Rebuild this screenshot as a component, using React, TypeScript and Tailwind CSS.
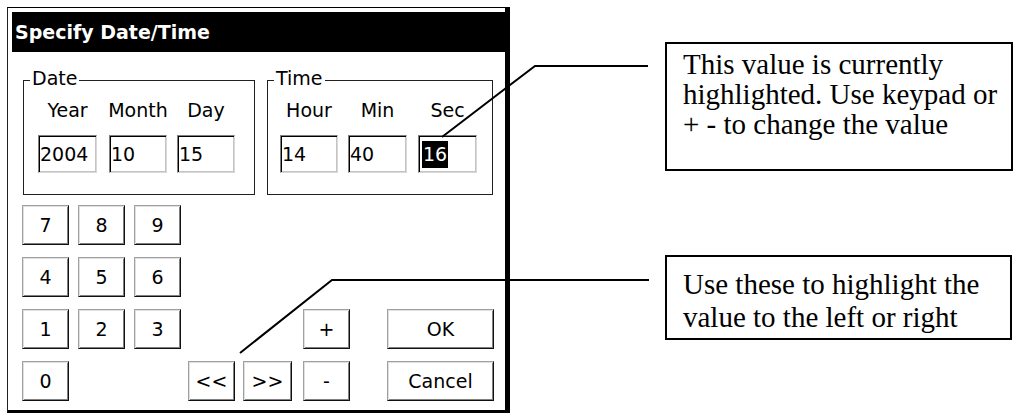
import React from "react";

const ui = "font-['DejaVu_Sans',sans-serif]";
const serif = "font-['Liberation_Serif','Times_New_Roman',serif]";

function Btn({ children, className = "" }: { children: React.ReactNode; className?: string }) {
  return (
    <div
      className={
        "flex h-[40px] items-center justify-center border border-t-[#a0a0a0] border-l-[#a0a0a0] border-r-[#101010] border-b-[#101010] bg-white text-[19px] leading-none text-black shadow-[inset_1px_1px_0_#e0e0e0,inset_-1px_-1px_0_#808080] " +
        className
      }
    >
      {children}
    </div>
  );
}

function Field({
  label,
  value,
  className = "",
  selected = false,
}: {
  label: string;
  value: string;
  className?: string;
  selected?: boolean;
}) {
  return (
    <div className={"flex flex-col items-center " + className}>
      <div className="text-[19px] leading-[22px]">{label}</div>
      <div className="mt-[14px] flex h-[38px] w-full items-center border border-t-[#808080] border-l-[#808080] border-r-[#d8d8d8] border-b-[#d8d8d8] pl-[1px] text-[19px] shadow-[inset_1px_1px_0_#000,inset_-1px_-1px_0_#c4c4c4]">
        {selected ? (
          <span className="ml-[2px] bg-black px-[1px] leading-[27px] text-white">{value}</span>
        ) : (
          <span className="leading-[22px]">{value}</span>
        )}
      </div>
    </div>
  );
}

function Group({ title, children, className = "" }: { title: string; children: React.ReactNode; className?: string }) {
  return (
    <div className={"relative h-[115px] border border-[#202020] " + className}>
      <div className="absolute -top-[14px] left-[6px] bg-white px-[2px] text-[19px] leading-[22px]">{title}</div>
      <div className="flex pt-[18px]">{children}</div>
    </div>
  );
}

export default function App() {
  return (
    <div className={"relative flex h-[413px] w-[1017px] overflow-hidden bg-white text-black " + ui}>
      {/* Dialog */}
      <div className="ml-[7px] mt-[7px] flex h-[406px] w-[503px] flex-col border-t border-l border-t-black border-l-[#202020] border-r-[5px] border-b-[3px] border-r-black border-b-black">
        <div className="ml-[4px] mt-[4px] flex h-[40px] items-center bg-black pl-[3px] text-[19px] font-bold text-white">
          Specify Date/Time
        </div>

        <div className="mt-[28px] flex">
          <Group title="Date" className="ml-[15px] w-[232px] pl-[14px]">
            <Field label="Year" value="2004" className="w-[59px]" />
            <Field label="Month" value="10" className="ml-[12px] w-[58px]" />
            <Field label="Day" value="15" className="ml-[10px] w-[58px]" />
          </Group>
          <Group title="Time" className="ml-[12px] w-[226px] pl-[12px]">
            <Field label="Hour" value="14" className="w-[58px]" />
            <Field label="Min" value="40" className="ml-[10px] w-[59px]" />
            <Field label="Sec" value="16" className="ml-[11px] w-[59px]" selected />
          </Group>
        </div>

        <div className="ml-[14px] mt-[10px] flex flex-col gap-[12px]">
          <div className="flex">
            <Btn className="w-[47px]">7</Btn>
            <Btn className="ml-[9px] w-[47px]">8</Btn>
            <Btn className="ml-[9px] w-[47px]">9</Btn>
          </div>
          <div className="flex">
            <Btn className="w-[47px]">4</Btn>
            <Btn className="ml-[9px] w-[47px]">5</Btn>
            <Btn className="ml-[9px] w-[47px]">6</Btn>
          </div>
          <div className="flex">
            <Btn className="w-[47px]">1</Btn>
            <Btn className="ml-[9px] w-[47px]">2</Btn>
            <Btn className="ml-[9px] w-[47px]">3</Btn>
            <Btn className="ml-[122px] w-[47px]">+</Btn>
            <Btn className="ml-[37px] w-[107px]">OK</Btn>
          </div>
          <div className="flex">
            <Btn className="w-[47px]">0</Btn>
            <Btn className="ml-[119px] w-[47px]">&lt;&lt;</Btn>
            <Btn className="ml-[8px] w-[49px]">&gt;&gt;</Btn>
            <Btn className="ml-[11px] w-[47px]">-</Btn>
            <Btn className="ml-[37px] w-[107px]">Cancel</Btn>
          </div>
        </div>
      </div>

      {/* Callouts */}
      <div className={"ml-[155px] flex flex-col " + serif}>
        <div className="mt-[42px] h-[129px] w-[348px] border-2 border-black pl-[16px] pt-[5px] text-[29px] leading-[30px] whitespace-nowrap">
          This value is currently
          <br />
          highlighted. Use keypad or
          <br />+ - to change the value
        </div>
        <div className="mt-[84px] h-[85px] w-[347px] border-2 border-black pl-[16px] pt-[11px] text-[29px] leading-[33px] whitespace-nowrap">
          Use these to highlight the
          <br />
          value to the left or right
        </div>
      </div>

      {/* Leader lines */}
      <svg className="pointer-events-none absolute left-0 top-0" width="1017" height="413" viewBox="0 0 1017 413">
        <polyline points="442,137 535,66 648,66" fill="none" stroke="#000" strokeWidth="2" />
        <polyline points="240,353 332,280 649,280" fill="none" stroke="#000" strokeWidth="2" />
      </svg>
    </div>
  );
}
